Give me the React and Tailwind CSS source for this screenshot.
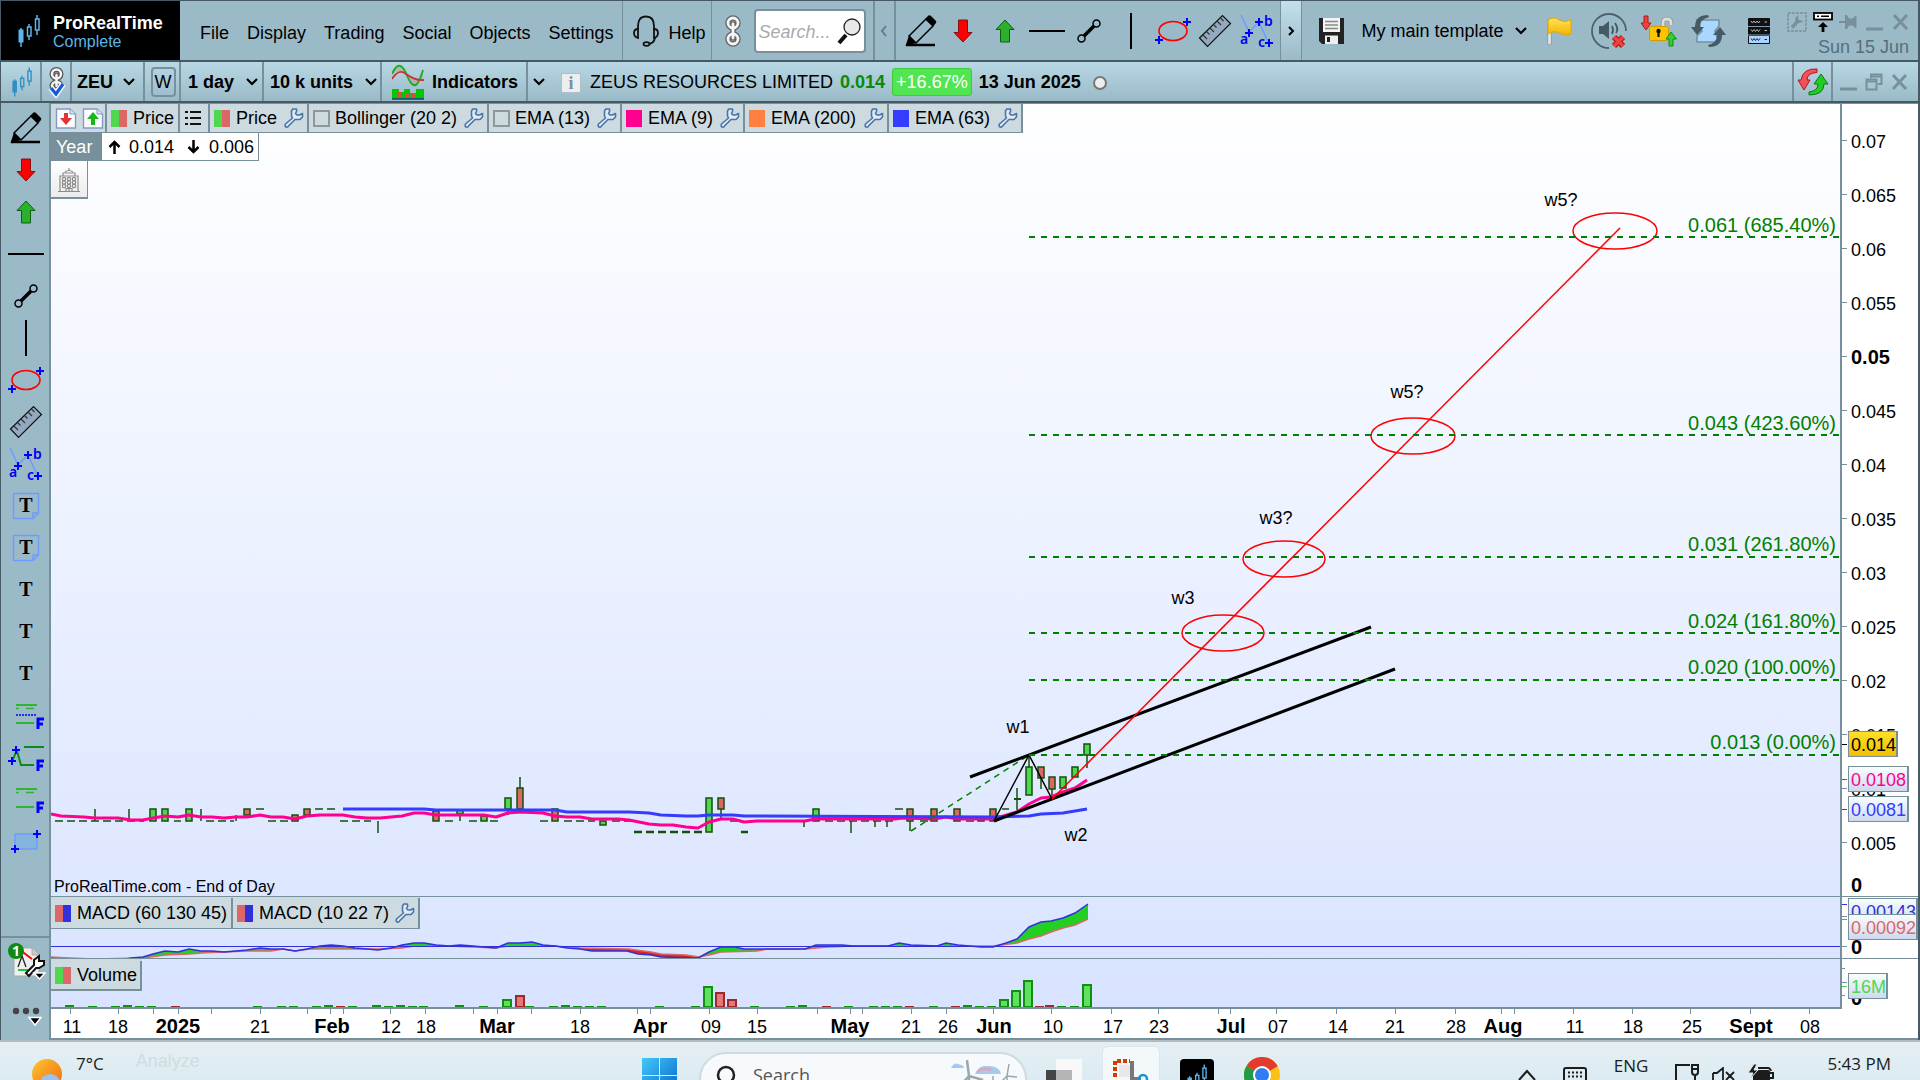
import React from "react";

/* ---------- icons ---------- */

const Pencil = () => (
  <svg width="32" height="32" viewBox="0 0 32 32">
    <path d="M4 21 L21 4 L28 11 L11 28 Z" fill="none" stroke="#000" strokeWidth="1.5" />
    <path d="M20 4 L23.5 0.5 Q25 0 26 1 L31 6 Q31.5 7 31 8 L28 11.5 Z" fill="#000" />
    <path d="M4 20.500 L11.500 28 L0.500 31 Z" fill="#000" />
    <path d="M1 30 H30" stroke="#000" strokeWidth="2.500" />
  </svg>
);

const DownArrow = () => (
  <svg width="20" height="24" viewBox="0 0 20 24">
    <path d="M5.500 1 H14.500 V13.500 H19 L10 23 L1 13.500 H5.500 Z" fill="#f00" stroke="#8a1010" />
  </svg>
);

const UpArrow = () => (
  <svg width="20" height="24" viewBox="0 0 20 24">
    <path d="M5.500 23 H14.500 V10.500 H19 L10 1 L1 10.500 H5.500 Z" fill="#2ab02a" stroke="#0f5c16" />
  </svg>
);

const HLine = () => (
  <svg width="36" height="4" viewBox="0 0 36 4">
    <path d="M0 2 H36" stroke="#000" strokeWidth="2" />
  </svg>
);

const VLine = () => (
  <svg width="4" height="36" viewBox="0 0 4 36">
    <path d="M2 0 V36" stroke="#000" strokeWidth="2" />
  </svg>
);

const Segment = () => (
  <svg width="24" height="24" viewBox="0 0 24 24">
    <path d="M7 17 L17 7" stroke="#000" strokeWidth="3.500" />
    <circle cx="4.500" cy="19.500" r="3.500" fill="none" stroke="#000" strokeWidth="1.500" />
    <circle cx="19.500" cy="4.500" r="3.500" fill="none" stroke="#000" strokeWidth="1.500" />
  </svg>
);

const Oval = () => (
  <svg width="38" height="28" viewBox="0 0 38 28">
    <ellipse cx="19" cy="14" rx="14" ry="9.500" fill="none" stroke="#f00" strokeWidth="1.600" />
    <path d="M29 5 H37 M33 1 V9 M1 23 H9 M5 19 V27" stroke="#00f" strokeWidth="2" />
  </svg>
);

const Ruler = () => (
  <svg width="34" height="34" viewBox="0 0 34 34">
    <path d="M1.500 24 L24.500 1.500 L32.500 9.500 L9.500 32.500 Z" fill="#93a9bf" stroke="#111" strokeWidth="1.200" />
    <path d="M5 21 l4 4 M8.500 17.500 l3 3 M12 14 l4 4 M15.500 10.500 l3 3 M19 7 l4 4 M22.500 4 l3 3" stroke="#333" strokeWidth="1.100" />
  </svg>
);

const Abc = () => (
  <svg width="34" height="34" viewBox="0 0 34 34" className="overflow-visible">
    <path d="M1 1 L9 18 L19 8 L28 28" fill="none" stroke="#6b9dff" strokeWidth="1.600" />
    <path d="M5 19 H13 M9 15 V23 M15 8 H23 M19 4 V12 M25 29 H33 M29 25 V33" stroke="#00f" strokeWidth="2" />
    <g fill="#00e" fontSize="14" fontWeight="600" fontFamily="'Noto Sans', sans-serif">
      <text x="0" y="30">a</text>
      <text x="24" y="12">b</text>
      <text x="18" y="33">c</text>
    </g>
  </svg>
);

const TextTool = ({ boxed }) => (
  <svg width="28" height="28" viewBox="0 0 28 28">
    {boxed && (
      <path d="M1.500 1.500 H26.500 V21 L21 26.500 H1.500 Z M26 21 H21 V26" fill="none" stroke="#6b9dff" strokeWidth="1.500" />
    )}
    <text x="14" y="20" textAnchor="middle" fontSize="20" fontWeight="700" fontFamily="'Liberation Serif', serif">T</text>
  </svg>
);

const Fib = ({ dotted }) => (
  <svg width="36" height="28" viewBox="0 0 36 28">
    <path d="M8 3 H29 M8 21 H26" stroke="#2fb52f" strokeWidth="2" />
    <path d="M8 6.500 H11 M18 6.500 H26" stroke="#2fb52f" strokeWidth="1.600" />
    {dotted && <path d="M8 13 H29" stroke="#00f" strokeWidth="1.500" strokeDasharray="2 1" />}
    <path d="M30 27 V17 H36 M30 22 H35" fill="none" stroke="#00f" strokeWidth="3" />
  </svg>
);

const FibPath = () => (
  <svg width="38" height="28" viewBox="0 0 38 28">
    <path d="M17 3 H37 M10 7 L14 21 H27 M9 8 L5 18" fill="none" stroke="#0c8a1c" strokeWidth="2" />
    <path d="M5 6 H13 M9 2 V10 M1 17 H9 M5 13 V21" stroke="#00f" strokeWidth="2" />
    <path d="M31 27 V17 H37 M31 22 H36" fill="none" stroke="#00f" strokeWidth="3" />
  </svg>
);

const RectTool = () => (
  <svg width="34" height="28" viewBox="0 0 34 28">
    <rect x="6" y="6" width="22" height="15" fill="#84b4dc" stroke="#6b9dff" strokeWidth="1.500" />
    <path d="M24 6 H32 M28 2 V10 M2 21 H10 M6 17 V25" stroke="#00f" strokeWidth="2" />
  </svg>
);

const Candles = ({ color, size = 22 }) => (
  <svg width={size} height={size + 4} viewBox="0 0 22 26" fill="none" stroke={color} className="overflow-visible">
    <path d="M3 10 V29 M11 6 V9 M11 18 V22 M19 -3 V1 M19 12 V17" strokeWidth="1.500" />
    <rect x="1" y="12" width="4" height="12" fill={color} />
    <rect x="9.500" y="9" width="3.500" height="9" strokeWidth="1.500" />
    <rect x="17.500" y="1" width="3.500" height="11" strokeWidth="1.500" />
  </svg>
);

const Chevron = ({ className = "", d = "M1 1 L6 6 L11 1" }) => (
  <svg className={className} width="12" height="8" viewBox="0 0 12 8">
    <path d={d} fill="none" stroke="#000" strokeWidth="2.200" />
  </svg>
);

const Wrench = ({ color = "#4a74a8" }) => (
  <svg width="20" height="20" viewBox="0 0 20 20" className="shrink-0">
    <path
      d="M12.500 1 H8.800 L7.500 3 V8 L8.500 10 L1.500 16 Q0.500 18 2 19 Q4 19.500 4.500 18 L11 11.500 H16 L18.500 9 V5.500 L15.500 7 H13 L11.500 5.500 L12.500 3.500 Z"
      fill="#dfeaf5"
      stroke={color}
      strokeWidth="1.600"
      strokeLinejoin="round"
    />
  </svg>
);

const Chain = () => (
  <svg width="18" height="34" viewBox="0 0 18 34" fill="none">
    <g stroke="#666" strokeWidth="5.500">
      <rect x="4" y="4" width="10" height="10" rx="5" />
      <rect x="4" y="20" width="10" height="10" rx="5" />
      <path d="M9 10 V24" strokeLinecap="round" />
    </g>
    <g stroke="#f4f4f4" strokeWidth="2.800">
      <rect x="4" y="4" width="10" height="10" rx="5" />
      <rect x="4" y="20" width="10" height="10" rx="5" />
      <path d="M9 10 V24" strokeLinecap="round" />
    </g>
  </svg>
);

const ChainCheck = () => (
  <svg width="18" height="32" viewBox="0 0 18 32" fill="none">
    <g stroke="#555" strokeWidth="5">
      <rect x="4" y="3.500" width="9" height="9" rx="4.500" />
      <rect x="4" y="16" width="9" height="8" rx="4" />
      <path d="M8.500 9 V20" strokeLinecap="round" />
    </g>
    <g stroke="#f4f4f4" strokeWidth="2.500">
      <rect x="4" y="3.500" width="9" height="9" rx="4.500" />
      <rect x="4" y="16" width="9" height="8" rx="4" />
      <path d="M8.500 9 V20" strokeLinecap="round" />
    </g>
    <path d="M3 22 L8 28 L15 18" stroke="#fff" strokeWidth="6" />
    <path d="M3 22 L8 28 L15 18" stroke="#1759d8" strokeWidth="3.200" />
  </svg>
);

const Headset = () => (
  <svg width="26" height="32" viewBox="0 0 26 32" fill="none" stroke="#111" strokeWidth="1.800">
    <path d="M5 15 V11 Q5 1.500 13 1.500 Q21 1.500 21 11 V15" />
    <path d="M5 14 Q1 14 1 18 Q1 22 5 23 Z M21 14 Q25 14 25 18 Q25 22 21 23 Z" />
    <path d="M22 23 Q21 28 16 29" />
    <ellipse cx="13.500" cy="29" rx="3" ry="1.800" />
  </svg>
);

const SearchGlass = () => (
  <svg width="24" height="28" viewBox="0 0 24 28" className="shrink-0">
    <path d="M9 18 L2 26" stroke="#111" strokeWidth="4" />
    <circle cx="15" cy="10" r="8" fill="#e8e8e8" stroke="#222" strokeWidth="1.300" />
  </svg>
);

const Save = () => (
  <svg width="27" height="28" viewBox="0 0 27 28">
    <path d="M1 1 H26 V27 H4 L1 24 Z" fill="#222" />
    <rect x="5" y="1" width="17" height="14" fill="#f4f4f4" />
    <path d="M7 4.500 H20 M7 8 H20 M7 11.500 H20" stroke="#888" strokeWidth="1.500" />
    <rect x="7" y="18.500" width="13" height="8.500" fill="#eee" />
    <rect x="9" y="20" width="3" height="5" fill="#222" />
  </svg>
);

const Flag = () => (
  <svg width="26" height="28" viewBox="0 0 26 28">
    <defs>
      <linearGradient id="flag" x1="0" y1="0" x2="0" y2="1">
        <stop offset="0" stopColor="#ffe45a" />
        <stop offset="1" stopColor="#f5b400" />
      </linearGradient>
    </defs>
    <path d="M3.500 3 V26" stroke="#8f9ba2" strokeWidth="4.500" strokeLinecap="round" />
    <path d="M3.500 3 V26" stroke="#e2e2e2" strokeWidth="2.800" strokeLinecap="round" />
    <path d="M2 3 Q8 -1 13 3 Q18 6 25 3 V17 Q18 19 13 16 Q8 13 2 17 Z" fill="url(#flag)" stroke="#e0a800" />
  </svg>
);

const Sound = () => (
  <svg width="38" height="38" viewBox="0 0 38 38">
    <path d="M19 36 A17 17 0 1 1 36 19" fill="none" stroke="#4d626d" strokeWidth="1.800" />
    <path d="M9 14 H13 L19 9 V27 L13 22 H9 Z" fill="#455a64" />
    <path d="M22 14 Q24 18 22 22 M25 11 Q29 17 26 21" fill="none" stroke="#455a64" strokeWidth="1.800" />
    <path d="M24 25 L33 34 M33 25 L24 34" stroke="#b01616" strokeWidth="6" />
    <path d="M24 25 L33 34 M33 25 L24 34" stroke="#f04040" strokeWidth="3.500" />
  </svg>
);

const Lock = () => (
  <svg width="38" height="32" viewBox="0 0 38 32">
    <path d="M23 13 V8 Q23 4 27 4 Q31 4 31 8 V10" fill="none" stroke="#8f9699" strokeWidth="4.500" />
    <path d="M23 13 V8 Q23 4 27 4 Q31 4 31 8 V10" fill="none" stroke="#dcdcdc" strokeWidth="2.800" />
    <rect x="9.500" y="11.500" width="19" height="14" rx="2" fill="#ffc400" stroke="#d39a00" />
    <circle cx="18.500" cy="16" r="2.200" fill="#111" />
    <path d="M18.500 16 V22" stroke="#111" strokeWidth="2.200" />
    <path d="M4 1 H8 V8 H11 L6 15 L1 8 H4 Z" fill="#ee4040" stroke="#b31818" />
    <path d="M29 31 H33 V24 H36.500 L31 17 L26 24 H29 Z" fill="#32d032" stroke="#118a11" />
  </svg>
);

const Sync = () => (
  <svg width="36" height="34" viewBox="0 0 36 34">
    <path d="M6 6 H28 V12 L24 17 L28 28 H6 V22 L11 17 Z" fill="#a8d8ff" stroke="#78909c" strokeWidth="1.600" />
    <path d="M17 1 Q4 1 4 13 H0 L6 21 L13 13 H9 Q9 5 18 3 Z" fill="#455a64" />
    <path d="M18 33 Q31 33 31 21 H35 L29 13 L22 21 H26 Q26 29 17 31 Z" fill="#455a64" />
  </svg>
);

const Server = () => (
  <svg width="24" height="28" viewBox="0 0 24 28">
    <rect x="1" y="1" width="22" height="26" rx="1" fill="#111" />
    <rect x="2" y="19" width="20" height="7" fill="#a8d4ff" />
    <path d="M1 9.500 H23 M1 18 H23" stroke="#7f9aa8" />
    <path d="M4 4 l1.500 2 l1.500 -2 l1.500 2 l1.500 -2 l1.500 2 l1.500 -2 M4 12.500 l1.500 2 l1.500 -2 l1.500 2 l1.500 -2 l1.500 2 l1.500 -2 M17.500 5 h2.500 M17.500 13.500 h2.500" fill="none" stroke="#bbb" />
    <path d="M4 21.500 l1.500 2 l1.500 -2 l1.500 2 l1.500 -2 l1.500 2 l1.500 -2 M17.500 22.500 h2.500" fill="none" stroke="#223" />
  </svg>
);

const WrenchBox = () => (
  <svg width="20" height="20" viewBox="0 0 20 20">
    <rect x="1" y="1" width="18" height="18" fill="none" stroke="#78909c" strokeWidth="1.500" strokeDasharray="3 1" />
    <path d="M5 15.500 L11 9" stroke="#78909c" strokeWidth="3.500" />
    <path d="M11.500 3.500 Q7 5 8.500 9 Q11 13 16.500 9 L13.500 8.500 L11 7 Z" fill="#78909c" />
  </svg>
);

const Detach = () => (
  <svg width="20" height="20" viewBox="0 0 20 20">
    <rect x="1" y="1" width="18" height="6.500" fill="#fff" stroke="#000" strokeWidth="1.800" />
    <path d="M4 4.200 H6 M8 4.200 H16" stroke="#000" strokeWidth="1.500" />
    <path d="M10 20 V13" stroke="#000" strokeWidth="2.800" />
    <path d="M5 15 L10 10 L15 15 Z" fill="#000" />
  </svg>
);

const Pin = () => (
  <svg width="18" height="14" viewBox="0 0 18 14">
    <path d="M0 7 H8" stroke="#78909c" strokeWidth="2" />
    <path d="M6 0 H8 L10 3.500 H14 L16 1 H17.500 V13 H16 L14 10.500 H10 L8 14 H6 Z" fill="#78909c" />
  </svg>
);

const Minimize = () => (
  <svg width="17" height="20" viewBox="0 0 17 20">
    <path d="M1 17 H16" stroke="#78909c" strokeWidth="3" strokeLinecap="round" />
  </svg>
);

const Close = () => (
  <svg width="17" height="18" viewBox="0 0 17 18">
    <path d="M2 2 L15 16 M15 2 L2 16" stroke="#78909c" strokeWidth="3" />
  </svg>
);

const Restore = () => (
  <svg width="18" height="18" viewBox="0 0 18 18" fill="none" stroke="#78909c" strokeWidth="2">
    <path d="M6 5 V1.500 H16.500 V11 H13" />
    <rect x="1.500" y="6.500" width="10" height="10" />
    <path d="M1.500 8.500 H11.500 M6 3.500 H16" />
  </svg>
);

const Refresh = () => (
  <svg width="32" height="28" viewBox="0 0 32 28">
    <path d="M20 1 Q6 0 4 12 H1 L7 22 L13 12 H10 Q10 5 20 4.500 Z" fill="#f3505a" stroke="#b01822" />
    <path d="M12 27 Q27 27 27 16 H31 L24 6 L17 16 H21 Q21 23 12 24 Z" fill="#20cc26" stroke="#0c7a12" />
  </svg>
);

const IndicatorIcon = () => (
  <svg width="32" height="38" viewBox="0 0 32 38">
    <path d="M0 11 Q7 -3 14 10 Q20 26 25 21 Q28 17 31 7 V17 Q22 18 14 11 Q7 6 0 11 Z" fill="#c87878" fillOpacity="0.350" />
    <path d="M0 11 Q7 -5 14 10 Q20 26 25 21 Q28 17 31 7" fill="none" stroke="#18b018" strokeWidth="1.800" />
    <path d="M0 16 Q7 5 14 11 Q24 18 32 17" fill="none" stroke="#c83232" strokeWidth="1.800" />
    <path d="M0 26 H7 V29 H12 V26 H18 V30 H24 V26 H32 V36 H0 Z" fill="#00c800" />
    <path d="M6 29 H10 V35 H6 Z M14 31 H17 V35 H14 Z M20 30 H24 V35 H20 Z" fill="#e04848" />
    <path d="M0 36 H32" stroke="#1a3a8a" strokeWidth="1.500" />
  </svg>
);

const PageArrow = ({ up }) => (
  <svg width="22" height="21" viewBox="0 0 22 21">
    <path d="M1.500 1 H15 L20.500 6 V20 H1.500 Z" fill="#fdfdff" stroke="#7f9cc8" strokeWidth="1.400" />
    <path d="M15 1 V6 H20.500" fill="#d4e0f2" stroke="#7f9cc8" />
    {up ? (
      <path d="M11 4 L17 11 H13 V17 H9 V11 H5 Z" fill="#16b816" />
    ) : (
      <path d="M11 17 L17 10 H13 V5 H9 V10 H5 Z" fill="#e63232" />
    )}
  </svg>
);

const ListIcon = () => (
  <svg width="18" height="16" viewBox="0 0 18 16">
    <path d="M6 2 H17 M6 8 H17 M6 14 H17" stroke="#111" strokeWidth="1.800" />
    <path d="M1 2 H4 M1 8 H4 M1 14 H4" stroke="#111" strokeWidth="2.200" />
  </svg>
);

const Building = () => (
  <svg width="22" height="24" viewBox="0 0 22 24" fill="none" stroke="#8c8c8c" strokeWidth="1.200">
    <path d="M2 23 V8 H20 V23 M0 23.500 H22 M5 8 V5 H17 V8 M7 4 Q11 1 15 4 M11 2 V0" />
    {[11, 14.500, 18].map((y) => [6, 11, 16].map((x) => <circle key={x + "-" + y} cx={x} cy={y} r="1.700" />))}
    <path d="M8 23 V20.500 H14 V23 M11 20.500 V23" />
  </svg>
);

const Notes = () => (
  <svg width="38" height="42" viewBox="0 0 38 42">
    <path d="M6 6 H24 L31 13 V34 H6 Z" fill="#f0f0f0" stroke="#aaa" />
    <path d="M24 6 V13 H31" fill="#ccc" stroke="#aaa" />
    <path d="M10 25 L14 14 L18 25" fill="none" stroke="#222" strokeWidth="1.300" />
    <path d="M12 8 L24 17" stroke="#f00" strokeWidth="2" />
    <path d="M10 28 H20" stroke="#1ec83c" strokeWidth="2" />
    <path d="M18 31 L26 23 V18 L31 14 V19 H36 V23 L31 26 H28 L21 34 Z" fill="#fff" stroke="#111" strokeWidth="2" />
    <path d="M26 31 H37 L31.500 37 Z" fill="#000" stroke="#fff" strokeWidth="1.500" />
    <circle cx="8" cy="9" r="8" fill="#0c8a12" />
    <text x="8" y="14" textAnchor="middle" fontSize="14" fontWeight="700" fill="#fff" fontFamily="'Noto Sans', sans-serif">1</text>
  </svg>
);

const More = () => (
  <svg width="30" height="22" viewBox="0 0 30 22">
    <circle cx="4" cy="5" r="3.200" fill="#444" />
    <circle cx="14" cy="5" r="3.200" fill="#444" />
    <circle cx="24" cy="5" r="3.200" fill="#444" />
    <path d="M17 11.500 H29 L23 19 Z" fill="#000" stroke="#fff" strokeWidth="1.500" />
  </svg>
);

const Swatch = ({ left, right = left }) => (
  <svg width="16" height="17" viewBox="0 0 16 17" className="shrink-0">
    <rect width="9" height="17" fill={left} />
    <rect x="8" width="8" height="17" fill={right} />
  </svg>
);

/* ---------- chart data ---------- */

const GREEN = "#4fd84f";
const RED = "#dd6666";

const candles = [
  // x, body top, body bottom, up, wick top, wick bottom
  [153, 809, 821, 1], [165, 809, 821, 1], [189, 809, 821, 1], [247, 809, 815, 0], [295, 815, 821, 0],
  [307, 809, 815, 0], [436, 811, 821, 0], [460, 810, 814, 1, 810, 821], [484, 816, 821, 1],
  [508, 798, 809, 1, 798, 815], [520, 788, 809, 0, 777, 809], [555, 809, 821, 0], [603, 821, 825, 1],
  [709, 798, 832, 1], [721, 798, 809, 0, 798, 818], [816, 809, 821, 1], [910, 809, 821, 0, 809, 831],
  [934, 809, 821, 0], [957, 809, 821, 0], [981, 817, 821, 0], [993, 809, 821, 0],
  [1029, 767, 795, 1, 757, 795], [1041, 767, 778, 0, 767, 789], [1052, 777, 789, 0, 777, 798],
  [1063, 777, 788, 1], [1075, 767, 777, 1], [1087, 744, 755, 1, 744, 768],
];

const wicks = [
  [95, 809, 821], [129, 809, 821], [201, 809, 821], [236, 815, 821], [378, 821, 833], [804, 821, 827],
  [851, 821, 833], [875, 821, 827], [887, 821, 827], [1017, 788, 810],
];

const flatRuns = [
  [55, 144, 821], [174, 181, 821], [206, 234, 821], [268, 289, 821], [340, 371, 821], [445, 453, 821],
  [469, 477, 821], [490, 501, 821], [540, 549, 821], [564, 595, 821], [612, 633, 821], [730, 737, 821],
  [825, 895, 821], [920, 928, 821], [966, 975, 821], [256, 264, 809], [315, 335, 809], [895, 903, 809], [1002, 1009, 809],
];

const ema9 =
  "51,814 61,816 84,817 95,818 118,818 131,820 143,820 153,818 165,816 178,817 189,815 201,817 212,817 224,818 236,817 247,817 260,815 271,817 283,817 295,819 307,816 320,815 343,815 355,817 367,818 380,818 391,817 402,816 414,813 424,813 436,815 484,815 496,817 508,813 520,812 543,813 555,816 567,817 580,817 592,819 618,819 629,820 649,824 661,825 673,825 686,827 698,828 709,822 721,819 733,819 744,822 757,821 805,821 815,819 895,819 903,818 934,819 946,817 958,819 993,819 1017,812 1029,804 1041,798 1051,797 1063,792 1075,788 1087,780";

const ema63 =
  "343,809 424,809 436,810 555,810 567,812 629,812 649,813 661,815 686,816 698,816 709,815 733,815 744,816 993,817 1029,816 1041,814 1063,813 1075,811 1087,809";

const macdLine = [
  [51, 960], [120, 960], [131, 958], [143, 957], [153, 954], [165, 951], [178, 952], [189, 949], [201, 951], [212, 951], [224, 952],
  [236, 951], [247, 950], [260, 948], [271, 949], [283, 949], [295, 951], [307, 949], [320, 946], [331, 945],
  [343, 946], [355, 948], [367, 949], [378, 950], [391, 948], [402, 945], [414, 943], [424, 943], [436, 945],
  [449, 946], [460, 945], [473, 946], [484, 947], [496, 948], [508, 943], [520, 943], [532, 942], [543, 945],
  [555, 946], [567, 948], [580, 949], [592, 951], [627, 951], [638, 954], [651, 955], [661, 957], [698, 958],
  [709, 952], [721, 947], [735, 947], [744, 949], [805, 949], [816, 945], [842, 945], [853, 946], [888, 946],
  [899, 943], [911, 945], [937, 946], [946, 943], [958, 945], [981, 947], [993, 947], [1006, 943], [1017, 939],
  [1029, 927], [1041, 922], [1051, 921], [1063, 918], [1075, 913], [1088, 904],
];

const macdSignal = [
  [51, 957], [69, 958], [94, 959], [143, 958], [165, 955], [189, 954], [201, 953], [224, 952], [247, 951],
  [271, 951], [283, 949], [295, 951], [310, 949], [378, 949], [402, 948], [414, 946], [449, 946], [496, 948],
  [508, 946], [555, 946], [580, 948], [629, 949], [651, 952], [661, 954], [686, 955], [699, 957], [709, 955],
  [721, 952], [757, 951], [768, 949], [806, 949], [827, 947], [853, 946], [993, 946], [1017, 943], [1029, 939],
  [1041, 936], [1051, 932], [1063, 928], [1075, 925], [1088, 919],
];

const valueAt = (pts, x) => {
  for (let i = 1; i < pts.length; i++) {
    const [x0, y0] = pts[i - 1];
    const [x1, y1] = pts[i];
    if (x <= x1) return y0 + ((y1 - y0) * (x - x0)) / (x1 - x0);
  }
  return pts[pts.length - 1][1];
};

const macdFill = [];
for (let x = 51; x < 1088; x += 3) {
  const x2 = Math.min(x + 3, 1088);
  const a = valueAt(macdLine, x);
  const b = valueAt(macdLine, x2);
  const c = valueAt(macdSignal, x2);
  const d = valueAt(macdSignal, x);
  macdFill.push({ pts: `${x},${a} ${x2},${b} ${x2},${c} ${x},${d}`, up: a + b < c + d });
}

const toPoints = (pts) => pts.map((p) => p.join(",")).join(" ");

const volumes = [
  [70, 2, 1], [93, 1, 1], [116, 1, 1], [128, 2, 1], [140, 1, 1], [152, 1, 1], [176, 1, 0], [258, 1, 1], [282, 1, 1],
  [294, 1, 1], [317, 1, 1], [329, 2, 1], [341, 1, 0], [353, 1, 1], [377, 2, 1], [389, 1, 1], [401, 2, 1],
  [413, 1, 1], [424, 1, 1], [460, 2, 1], [484, 1, 1], [507, 6, 1], [520, 10, 0], [530, 1, 1], [554, 1, 1],
  [566, 2, 1], [578, 1, 1], [590, 1, 1], [602, 1, 1], [660, 1, 1], [696, 1, 1], [708, 19, 1], [720, 13, 0],
  [732, 6, 0], [755, 1, 1], [791, 1, 1], [803, 2, 1], [827, 1, 0], [849, 1, 1], [874, 1, 1], [886, 1, 1],
  [898, 1, 1], [910, 1, 0], [934, 1, 1], [956, 1, 0], [968, 2, 1], [980, 1, 1], [992, 1, 1], [1004, 6, 1],
  [1016, 15, 1], [1028, 25, 1], [1040, 1, 0], [1050, 2, 0], [1062, 1, 1], [1075, 1, 1], [1087, 21, 1],
];

const fibLevels = [
  [237, "0.061 (685.40%)", 232], [435, "0.043 (423.60%)", 430], [557, "0.031 (261.80%)", 551],
  [633, "0.024 (161.80%)", 628], [680, "0.020 (100.00%)", 674], [755, "0.013 (0.00%)", 749],
];

const priceTicks = [
  [141, "0.07"], [195, "0.065"], [249, "0.06"], [303, "0.055"], [357, "0.05", true], [411, "0.045"], [465, "0.04"],
  [519, "0.035"], [573, "0.03"], [627, "0.025"], [681, "0.02"], [735, "0.015"], [789, "0.01"], [843, "0.005"],
];

const dateTicks = [
  70, 118, 153, 178, 211, 260, 307, 330, 343, 390, 425, 473, 497, 531, 580, 637, 650, 709, 757, 817, 850, 862, 911,
  946, 993, 1051, 1111, 1158, 1218, 1230, 1276, 1336, 1395, 1455, 1501, 1514, 1573, 1632, 1690, 1750, 1809,
];

const dateLabels = [
  [72, "11"], [118, "18"], [178, "2025", true], [260, "21"], [332, "Feb", true], [391, "12"], [426, "18"],
  [497, "Mar", true], [580, "18"], [650, "Apr", true], [711, "09"], [757, "15"], [850, "May", true], [911, "21"],
  [948, "26"], [994, "Jun", true], [1053, "10"], [1113, "17"], [1159, "23"], [1231, "Jul", true], [1278, "07"],
  [1338, "14"], [1395, "21"], [1456, "28"], [1503, "Aug", true], [1575, "11"], [1633, "18"], [1692, "25"],
  [1751, "Sept", true], [1810, "08"],
];

/* ---------- chart panels ---------- */

const PricePlot = () => (
  <svg className="absolute inset-0 h-full w-full">
    <g transform="translate(-51 -104)">
      <g stroke="#14500a" strokeWidth="1.500">
        {flatRuns.map(([a, b, y]) => (
          <path key={a + "-" + y} d={`M${a} ${y} H${b}`} strokeDasharray="8 4" />
        ))}
        <path d="M634 832 H703 M741 832 H748" strokeWidth="2.500" strokeDasharray="8 4" />
        <path d="M1014 799 H1021" strokeWidth="2" />
        {wicks.map(([x, a, b]) => (
          <path key={x} d={`M${x} ${a} V${b}`} />
        ))}
        {candles.map(([x, a, b, up, wa, wb]) => (
          <g key={x}>
            {wa && <path d={`M${x} ${wa} V${wb}`} />}
            <rect x={x - 3} y={a} width="6" height={b - a} fill={up ? GREEN : RED} />
          </g>
        ))}
      </g>
      <polyline points={ema9} fill="none" stroke="#ff0090" strokeWidth="3" strokeLinejoin="round" />
      <polyline points={ema63} fill="none" stroke="#333cff" strokeWidth="3" strokeLinejoin="round" />
      <path d="M911 831 L1029 755" stroke="#008000" strokeWidth="1.500" strokeDasharray="6 5" />
      <path d="M994 821 L1029 755 L1052 799" fill="none" stroke="#000" strokeWidth="1.500" />
      <path d="M970 777 L1371 627 M994 821 L1395 669" stroke="#000" strokeWidth="3" />
      <path d="M1052 799 L1620 228" stroke="#f00" strokeWidth="1.500" />
      <g fill="none" stroke="#f00" strokeWidth="1.500">
        <ellipse cx="1615" cy="231" rx="42" ry="18" />
        <ellipse cx="1413" cy="436" rx="42" ry="18" />
        <ellipse cx="1284" cy="559" rx="41" ry="18" />
        <ellipse cx="1223" cy="633" rx="41" ry="18" />
      </g>
      <g fontSize="18" textAnchor="middle">
        <text x="1561" y="206">w5?</text>
        <text x="1407" y="398">w5?</text>
        <text x="1276" y="524">w3?</text>
        <text x="1183" y="604">w3</text>
        <text x="1018" y="733">w1</text>
        <text x="1076" y="841">w2</text>
      </g>
    </g>
    {fibLevels.map(([y, label, base]) => (
      <g key={label}>
        <line x1="978" x2="100%" y1={y - 104} y2={y - 104} stroke="#008000" strokeWidth="2" strokeDasharray="6 6" />
        <text x="100%" dx="-4" y={base - 104} textAnchor="end" fontSize="20" fill="#008000">
          {label}
        </text>
      </g>
    ))}
  </svg>
);

const Tag = ({ y, w, h = 26, color, fill = "url(#tag)", children }) => (
  <g>
    <rect x="6.500" y={y - 0.5} width={w} height={h} fill={fill} stroke="#78909c" />
    <path d={`M${w + 6} ${y - 1} v${h + 1}`} stroke="#78909c" strokeWidth="2" />
    <text x="9" y={y + 19} fontSize="18" fill={color}>
      {children}
    </text>
  </g>
);

const Gradients = () => (
  <defs>
    <linearGradient id="tag" x1="0" y1="0" x2="0" y2="1">
      <stop offset="0" stopColor="#f8fffe" />
      <stop offset="1" stopColor="#cdd8f0" />
    </linearGradient>
    <linearGradient id="gold" x1="0" y1="0" x2="0" y2="1">
      <stop offset="0" stopColor="#ffe128" />
      <stop offset="1" stopColor="#f3bd00" />
    </linearGradient>
  </defs>
);

const PriceAxis = () => (
  <svg className="absolute inset-0 h-full w-full overflow-hidden">
    <Gradients />
    {priceTicks.map(([y, label, bold]) => (
      <g key={label}>
        <path d={`M0 ${y - 104 - 0.5} H5`} stroke="#78909c" />
        <text x="9" y={y - 97} fontSize={bold ? 20 : 18} fontWeight={bold ? 700 : 400}>
          {label}
        </text>
      </g>
    ))}
    <text x="9" y="788" fontSize="20" fontWeight="700">0</text>
    <path d="M0 640.500 H5" stroke="#000" />
    <path d="M0 675.500 H5" stroke="#ff0090" />
    <path d="M0 705.500 H5" stroke="#333cff" />
    <Tag y={628} w={49} h={25} color="#000" fill="url(#gold)">0.014</Tag>
    <Tag y={663} w={60} h={25} color="#ff0090">0.0108</Tag>
    <Tag y={693} w={60} h={25} color="#333cff">0.0081</Tag>
  </svg>
);

const MacdPlot = () => (
  <svg className="absolute inset-0 h-full w-full">
    <g transform="translate(-51 -897)">
      {macdFill.map((f) => (
        <polygon key={f.pts} points={f.pts} fill={f.up ? "#22d022" : "#e02020"} />
      ))}
      <polyline points={toPoints(macdSignal)} fill="none" stroke="#dd6666" strokeWidth="1.500" />
      <polyline points={toPoints(macdLine)} fill="none" stroke="#3030dd" strokeWidth="1.500" />
    </g>
    <line x1="0" x2="100%" y1="49.500" y2="49.500" stroke="#3030dd" />
  </svg>
);

const MacdAxis = () => (
  <svg className="absolute inset-0 h-full w-full overflow-hidden">
    <path d="M0 7.500 H5" stroke="#3030dd" />
    <path d="M0 19.500 H5 M0 49.500 H5" stroke="#78909c" />
    <path d="M0 22.500 H5" stroke="#dd6666" />
    <Tag y={2} w={69} color="#3030dd">0.00143</Tag>
    <Tag y={18} w={69} h={25} color="#dd6666">0.00092</Tag>
    <text x="9" y="57" fontSize="20" fontWeight="700">0</text>
  </svg>
);

const VolumePlot = () => (
  <svg className="absolute inset-0 h-full w-full">
    {volumes.map(([x, h, up]) =>
      h < 4 ? (
        <rect key={x} x={x - 56} y={48 - h} width="9" height={h} fill={up ? "#109010" : "#a02828"} />
      ) : (
        <rect key={x} x={x - 55} y={47 - h} width="8" height={h + 1} fill={up ? "#5fe05f" : "#e57878"} stroke={up ? "#109010" : "#a02828"} strokeWidth="2" />
      )
    )}
  </svg>
);

const VolumeAxis = () => (
  <svg className="absolute inset-0 h-full w-full overflow-visible">
    <path d="M0 9.500 H3 M0 23.500 H5 M0 36.500 H3" stroke="#78909c" />
    <path d="M0 27.500 H5" stroke="#4fd84f" />
    <text x="9" y="46" fontSize="20" fontWeight="700">0</text>
    <Tag y={15} w={39} h={25} color="#4fd84f">16M</Tag>
  </svg>
);

const DateAxis = () => (
  <svg className="h-[29px] w-full">
    <g transform="translate(-51 0)">
      {dateTicks.map((x) => (
        <path key={x} d={`M${x}.500 0 V5`} stroke="#78909c" />
      ))}
      {dateLabels.map(([x, label, bold]) => (
        <text key={x} x={x} y="24" textAnchor="middle" fontSize={bold ? 20 : 18} fontWeight={bold ? 700 : 400}>
          {label}
        </text>
      ))}
    </g>
  </svg>
);

const Panel = ({ className, plot, axis, children }) => (
  <div className={"flex border-[#78909c] " + className}>
    <div className="relative min-w-0 flex-1">
      {plot}
      <div className="relative h-full">{children}</div>
    </div>
    <div className="relative w-[78px] shrink-0 border-l-2 border-[#78909c] bg-white">{axis}</div>
  </div>
);

/* ---------- bars ---------- */

const tools = [
  ["Pencil", <Pencil />], ["Sell arrow", <DownArrow />], ["Buy arrow", <UpArrow />], ["Horizontal line", <HLine />],
  ["Segment", <Segment />], ["Vertical line", <VLine />], ["Ellipse", <Oval />], ["Ruler", <Ruler />], ["Pattern", <Abc />],
];

const sideTools = [
  ...tools, ["Note 1", <TextTool boxed />], ["Note 2", <TextTool boxed />], ["Text 1", <TextTool />],
  ["Text 2", <TextTool />], ["Text 3", <TextTool />], ["Fibonacci retracement", <Fib dotted />],
  ["Fibonacci projection", <FibPath />], ["Fibonacci levels", <Fib />], ["Rectangle", <RectTool />],
];

const menus = ["File", "Display", "Trading", "Social", "Objects", "Settings"];

const cell = "flex shrink-0 items-center border-r-2 border-[#78909c] ";
const tab = "flex h-full shrink-0 items-center gap-[5px] border-r-2 border-[#78909c] pl-1 whitespace-nowrap ";

const Header = () => (
  <header className="flex h-[62px] shrink-0 border-t border-b-2 border-[#455a64] bg-[#9bbac8]">
    <div className="flex w-[179px] shrink-0 items-center gap-[13px] bg-black pl-[17px]">
      <Candles color="#5db4e8" />
      <div className="pt-[2px]">
        <div className="text-[18px] leading-[20px] font-bold text-white">ProRealTime</div>
        <div className="text-[16px] leading-[18px] text-[#5db4e8]">Complete</div>
      </div>
    </div>
    <nav className="flex shrink-0 items-center gap-[18px] border-r border-[#78909c] pt-[4px] pr-[8px] pl-[20px]">
      {menus.map((m) => (
        <button key={m}>{m}</button>
      ))}
    </nav>
    <button className="flex w-[89px] shrink-0 items-center gap-[10px] border-r border-[#78909c] pl-[10px]">
      <Headset />
      <span className="pt-[4px]">Help</span>
    </button>
    <button aria-label="Link" className="flex w-[42px] shrink-0 items-center justify-center">
      <Chain />
    </button>
    <label className="my-auto flex h-[44px] w-[112px] shrink-0 items-center rounded-[4px] border-2 border-[#78909c] bg-white pr-[3px] pl-[3px]">
      <input aria-label="Search" placeholder="Search..." className="mt-[3px] w-[78px] bg-transparent italic outline-none placeholder:text-[#aaa]" />
      <SearchGlass />
    </label>
    <button aria-label="Previous tools" className="ml-[7px] flex w-[23px] shrink-0 items-center justify-center border-x-2 border-[#78909c]">
      <svg width="8" height="12" viewBox="0 0 8 12">
        <path d="M6 1 L2 6 L6 11" fill="none" stroke="#607d8b" strokeWidth="2" />
      </svg>
    </button>
    <div className="flex shrink-0 pl-[4px]">
      {tools.map(([name, icon]) => (
        <button key={name} aria-label={name} className="flex w-[42px] items-center justify-center">
          {icon}
        </button>
      ))}
    </div>
    <button aria-label="More tools" className="ml-[2px] flex w-[22px] shrink-0 items-center justify-center border-x border-[#78909c] bg-linear-to-b from-[#c3e0ec] to-[#9bbac8]">
      <svg width="8" height="12" viewBox="0 0 8 12">
        <path d="M2 2 L6 6 L2 10" fill="none" stroke="#000" strokeWidth="2" />
      </svg>
    </button>
    <button className="flex shrink-0 items-center gap-[13px] pl-[16px]">
      <Save />
      <span className="flex items-center gap-[11px] pl-[4px]">
        My main template
        <Chevron />
      </span>
    </button>
    <div className="ml-auto flex shrink-0">
      {[["Alerts", <Flag />], ["Sound", <Sound />], ["Trading lock", <Lock />], ["Sync", <Sync />], ["Server", <Server />]].map(([n, i]) => (
        <button key={n} aria-label={n} className="flex w-[50px] items-center justify-center">
          {i}
        </button>
      ))}
      <div className="flex w-[134px] flex-col pt-[8px] pr-[5px]">
        <div className="flex h-[26px] items-center">
          {[["Customize", <WrenchBox />], ["Detach", <Detach />], ["Pin", <Pin />], ["Minimize", <Minimize />], ["Close", <Close />]].map(([n, i]) => (
            <button key={n} aria-label={n} className="flex flex-1 justify-center">
              {i}
            </button>
          ))}
        </div>
        <span className="pr-[4px] text-right leading-[26px] text-[#546e7a]">Sun 15 Jun</span>
      </div>
    </div>
  </header>
);

const ChartBar = () => (
  <div className="flex h-[41px] shrink-0 border-b-2 border-[#455a64] bg-linear-to-b from-[#b9d8e5] to-[#9bbac8]">
    <button aria-label="Chart type" className={cell + "w-[41px] justify-center pr-[2px] pl-[4px]"}>
      <Candles color="#2f8fc4" size={20} />
    </button>
    <button aria-label="Linked" className={cell + "w-[30px] justify-center pl-[2px]"}>
      <ChainCheck />
    </button>
    <button className={cell + "w-[73px] gap-[10px] pl-[5px] font-bold"}>
      ZEU <Chevron />
    </button>
    <div className={cell + "w-[36px] justify-center pl-[2px]"}>
      <button className="h-[30px] w-[25px] rounded-[4px] border-2 border-[#78909c] pt-[1px]">
        <span className="flex justify-center">W</span>
      </button>
    </div>
    <button className={cell + "w-[83px] gap-[12px] pl-[7px] font-bold"}>
      1 day <Chevron />
    </button>
    <button className={cell + "w-[118px] gap-[12px] pl-[6px] font-bold"}>
      10 k units <Chevron />
    </button>
    <button className={cell + "w-[146px] gap-[8px] pl-[10px] font-bold"}>
      <IndicatorIcon /> Indicators
    </button>
    <button aria-label="Indicator menu" className="flex w-[22px] shrink-0 items-center justify-center">
      <Chevron />
    </button>
    <div className="flex min-w-0 flex-1 items-center pl-[11px] whitespace-nowrap">
      <button aria-label="Information" className="mt-[2px] h-[20px] w-[20px] border border-[#b0bec5] bg-[#eceff1] font-['Liberation_Serif',serif] text-[18px] leading-[18px] font-bold text-[#78909c]">
        i
      </button>
      <span className="ml-[9px]">ZEUS RESOURCES LIMITED</span>
      <span className="ml-[7px] font-bold text-[#0a8a0a]">0.014</span>
      <span className="ml-[7px] rounded-[3px] border border-[#3ccc3c] bg-[#52e552] px-[3px] leading-[26px] text-white">+16.67%</span>
      <span className="ml-[7px] font-bold">13 Jun 2025</span>
      <span className="mt-[3px] ml-[12px] h-[14px] w-[14px] rounded-full border-2 border-[#777] bg-[#eee]" />
    </div>
    <button aria-label="Refresh" className="flex w-[41px] shrink-0 items-center justify-center border-x-2 border-[#78909c]">
      <Refresh />
    </button>
    <div className="flex w-[85px] shrink-0 items-center pr-[6px] pl-[3px]">
      {[["Minimize chart", <Minimize />], ["Restore chart", <Restore />], ["Close chart", <Close />]].map(([n, i]) => (
        <button key={n} aria-label={n} className="flex flex-1 justify-center">
          {i}
        </button>
      ))}
    </div>
  </div>
);

const Sidebar = () => (
  <aside className="flex w-[50px] shrink-0 flex-col border-r-2 border-[#78909c] bg-[#9bbac8] pt-[4px]">
    {sideTools.map(([name, icon]) => (
      <button key={name} aria-label={name} className="flex h-[42px] items-center justify-center pl-[2px]">
        {icon}
      </button>
    ))}
    <div className="mt-auto flex h-[104px] flex-col items-center border-t-2 border-[#78909c] pt-[4px] pl-[3px]">
      <button aria-label="Drawing objects">
        <Notes />
      </button>
      <button aria-label="More" className="mt-[22px]">
        <More />
      </button>
    </div>
  </aside>
);

const Indicator = ({ width, color, label, check, wrench = true, left, right }) => (
  <div className={tab + width}>
    {check ? (
      <label className="flex items-center gap-[5px]">
        <input type="checkbox" className="h-[17px] w-[17px] appearance-none border-2 border-[#90979b]" />
        {label}
      </label>
    ) : (
      <button className="flex items-center gap-[6px]">
        <Swatch left={color || left} right={color || right} />
        {label}
      </button>
    )}
    {wrench && (
      <button aria-label={label + " settings"} className="mr-[3px] ml-auto">
        <Wrench />
      </button>
    )}
  </div>
);

const PriceTabs = () => (
  <div className="flex h-full flex-col items-start">
    <div className="flex h-[29px] shrink-0 border-b border-[#78909c] bg-[#cddbe1]">
      <div className={tab + "w-[56px]"}>
        <button aria-label="Collapse"><PageArrow /></button>
        <button aria-label="Expand"><PageArrow up /></button>
      </div>
      <Indicator width="w-[73px]" left={GREEN} right={RED} label="Price" wrench={false} />
      <button aria-label="List" className={tab + "w-[30px]"}>
        <ListIcon />
      </button>
      <Indicator width="w-[99px]" left={GREEN} right={RED} label="Price" />
      <Indicator width="w-[180px]" check label="Bollinger (20 2)" />
      <Indicator width="w-[133px]" check label="EMA (13)" />
      <Indicator width="w-[123px]" color="#ff0090" label="EMA (9)" />
      <Indicator width="w-[144px]" color="#ff8040" label="EMA (200)" />
      <Indicator width="w-[134px]" color="#333cff" label="EMA (63)" />
    </div>
    <div className="flex h-[28px] shrink-0 items-center border-r border-b border-[#78909c] bg-white">
      <span className="flex h-full w-[51px] items-center bg-[#78909c] pl-[5px] text-white">Year</span>
      <svg className="ml-[6px]" width="13" height="14" viewBox="0 0 13 14">
        <path d="M6.500 14 V2 M1.500 7 L6.500 2 L11.500 7" fill="none" stroke="#000" strokeWidth="2.500" />
      </svg>
      <span className="ml-[8px]">0.014</span>
      <svg className="ml-[13px]" width="13" height="14" viewBox="0 0 13 14">
        <path d="M6.500 0 V12 M1.500 7 L6.500 12 L11.500 7" fill="none" stroke="#000" strokeWidth="2.500" />
      </svg>
      <span className="mr-[4px] ml-[9px]">0.006</span>
    </div>
    <button aria-label="Company" className="flex h-[38px] w-[37px] shrink-0 items-center justify-center border-r border-b-2 border-[#78909c] bg-linear-to-b from-white to-[#ececec] pt-[2px]">
      <Building />
    </button>
    <span className="mt-auto pl-[3px] text-[16px] leading-[18px]">ProRealTime.com - End of Day</span>
  </div>
);

/* ---------- taskbar ---------- */

const Taskbar = () => (
  <footer className="flex h-[40px] shrink-0 items-start overflow-hidden border-t-2 border-[#b0bcc2] bg-linear-to-b from-[#e4eff4] to-[#dcebf2] font-['Open_Sans',sans-serif] text-[17px] text-[#1c1c1c]">
    <button className="mt-[12px] flex w-[640px] shrink-0 items-start gap-[14px] pl-[32px]">
      <svg className="mt-[5px]" width="30" height="30" viewBox="0 0 30 30">
        <defs>
          <linearGradient id="sun" x1="0" y1="0" x2="1" y2="1">
            <stop offset="0" stopColor="#ffc531" />
            <stop offset="1" stopColor="#f06a10" />
          </linearGradient>
        </defs>
        <circle cx="15" cy="15" r="15" fill="url(#sun)" />
        <ellipse cx="18" cy="24" rx="10" ry="9" fill="#9cc0ef" />
      </svg>
      <span className="leading-[20px]">7°C</span>
      <span className="ml-[18px] font-['Liberation_Sans',sans-serif] text-[18px] leading-[14px] text-[#cfdde0]">Analyze</span>
    </button>
    <button aria-label="Start" className="mt-[16px] ml-[2px]">
      <svg width="36" height="36" viewBox="0 0 36 36">
        <defs>
          <linearGradient id="win" x1="0" y1="0" x2="1" y2="1">
            <stop offset="0" stopColor="#45c8fb" />
            <stop offset="1" stopColor="#0466c8" />
          </linearGradient>
        </defs>
        <path d="M0 0 H17 V17 H0 Z M18 0 H35 V17 H18 Z M0 18 H17 V35 H0 Z M18 18 H35 V35 H18 Z" fill="url(#win)" />
      </svg>
    </button>
    <label className="mt-[10px] ml-[21px] flex h-[54px] w-[328px] shrink-0 items-start rounded-full border-2 border-[#d0dade] bg-[#f6fafc] pl-[14px]">
      <svg className="mt-[10px]" width="22" height="28" viewBox="0 0 22 28" fill="none" stroke="#222" strokeWidth="2.500">
        <circle cx="11" cy="11" r="8" />
        <path d="M6 18 L1 25" />
      </svg>
      <input aria-label="Search Windows" placeholder="Search" className="mt-[8px] ml-[16px] h-[26px] w-[196px] bg-transparent text-[18px] outline-none placeholder:text-[#555]" />
      <svg className="mt-[6px]" width="70" height="32" viewBox="0 0 70 32">
        <path d="M2 8 Q5 2 9 4 Q15 5 15 8 Z M26 14 Q30 5 37 6 Q50 5 52 14 Z" fill="#a9c8ee" />
        <path d="M28 12 Q34 7 42 10" stroke="#e5a0b8" strokeWidth="2" fill="none" />
        <g stroke="#9aa8ae" strokeWidth="2.500" fill="none">
          <path d="M18 0 L20 16 L34 20 M20 16 L10 27 M20 16 V32" />
          <path d="M60 4 L58 16 L68 17 M58 16 L50 24 M58 16 V32 M44 16 V28 L38 32" strokeWidth="1.500" />
        </g>
      </svg>
    </label>
    <button aria-label="Task view" className="mt-[16px] ml-[19px]">
      <svg width="36" height="30" viewBox="0 0 36 30">
        <rect x="0" y="12" width="26" height="20" fill="#444" />
        <rect x="10" y="1" width="26" height="28" fill="#f8f8f8" />
        <rect x="10" y="12" width="16" height="20" fill="#b5b5b5" />
      </svg>
    </button>
    <button aria-label="Snipping tool" className="mt-[4px] ml-[20px] flex h-[50px] w-[58px] shrink-0 justify-center rounded-[6px] border border-[#dfe5e8] bg-[#f3f8fa] pt-[12px]">
      <svg width="36" height="32" viewBox="0 0 36 32">
        <path d="M2 18 V2 H17" fill="none" stroke="#d83b01" strokeWidth="4" strokeDasharray="4 2" />
        <rect x="6" y="6" width="12" height="12" fill="#e8e8e8" />
        <path d="M19 2 V20 H28" fill="none" stroke="#777" strokeWidth="4" />
        <circle cx="30" cy="20" r="4" fill="none" stroke="#1296d8" strokeWidth="2.500" />
      </svg>
    </button>
    <button aria-label="ProRealTime" className="mt-[17px] ml-[20px] flex h-[35px] w-[34px] shrink-0 items-start justify-center rounded-t-[4px] bg-black pt-[8px]">
      <Candles color="#5db4e8" size={20} />
    </button>
    <button aria-label="Chrome" className="mt-[15px] ml-[30px]">
      <svg width="36" height="36" viewBox="0 0 36 36">
        <circle cx="18" cy="18" r="18" fill="#fbc116" />
        <path d="M18 18 L2.400 9 A18 18 0 0 1 33.600 9 Z" fill="#e33b2e" />
        <path d="M18 9 H33.600 L18 18 Z" fill="#e33b2e" />
        <path d="M18 18 L2.400 9 A18 18 0 0 0 18 36 Z" fill="#229a48" />
        <circle cx="18" cy="18" r="9" fill="#fff" />
        <circle cx="18" cy="18" r="7" fill="#2f7df0" />
      </svg>
    </button>
    <div className="ml-auto flex shrink-0 items-start pr-[29px]">
      <svg className="mt-[27px]" width="18" height="12" viewBox="0 0 18 12">
        <path d="M1 11 L9 2 L17 11" fill="none" stroke="#1c1c1c" strokeWidth="2" />
      </svg>
      <svg className="mt-[25px] ml-[27px]" width="24" height="18" viewBox="0 0 24 18">
        <rect x="1" y="1" width="22" height="20" rx="2" fill="none" stroke="#1c1c1c" strokeWidth="2" />
        <path d="M5 5.500 H19 M5 9.500 H19" stroke="#1c1c1c" strokeWidth="2" strokeDasharray="2 2" />
      </svg>
      <span className="mt-[12px] ml-[27px] leading-[24px]">ENG</span>
      <svg className="mt-[21px] ml-[27px]" width="25" height="18" viewBox="0 0 25 18" fill="none" stroke="#1c1c1c" strokeWidth="2">
        <path d="M15 2 H1 V18 M17 2 H23 V9 Q23 12 20 12 Q17 12 17 9 Z M20 12 V18 M17 6 H23" />
      </svg>
      <svg className="mt-[25px] ml-[12px]" width="24" height="16" viewBox="0 0 24 16" fill="none" stroke="#1c1c1c" strokeWidth="1.800">
        <path d="M1 6 H5 L11 1 V18 M1 6 V14 H5 M14 5 L22 13 M22 5 L14 13" />
      </svg>
      <svg className="mt-[22px] ml-[12px]" width="26" height="18" viewBox="0 0 26 18">
        <rect x="5" y="6" width="17" height="14" rx="2" fill="#1c1c1c" />
        <path d="M22 9 H25 V14 H22 M10 4 H20 Q22 4 23 7" fill="none" stroke="#1c1c1c" strokeWidth="2" />
        <path d="M6 0 L0 9 H5 L2 15 L10 6 H6 L9 0 Z" fill="#1c1c1c" stroke="#e0ecf2" />
      </svg>
      <span className="mt-[10px] ml-[53px] leading-[24px]">5:43 PM</span>
    </div>
  </footer>
);

export default function App() {
  return (
    <div className="flex h-screen flex-col overflow-hidden bg-[#9bbac8] font-['Liberation_Sans',Arial,sans-serif] text-[18px] leading-[22px] text-black">
      <div className="flex min-h-0 flex-1 flex-col border-r-2 border-l border-[#455a64]">
        <Header />
        <ChartBar />
        <div className="flex min-h-0 flex-1">
          <Sidebar />
          <main className="flex min-w-0 flex-1 flex-col border-t border-b-2 border-[#78909c] bg-white">
            <div className="flex min-h-0 flex-1 flex-col bg-linear-to-b from-white to-[#d8e3ff]">
              <Panel className="min-h-0 flex-1 border-b" plot={<PricePlot />} axis={<PriceAxis />}>
                <PriceTabs />
              </Panel>
              <Panel className="h-[62px] shrink-0 border-b" plot={<MacdPlot />} axis={<MacdAxis />}>
                <div className="flex">
                  <div className="flex h-[32px] border-b border-[#78909c] bg-[#cddbe1] pt-[1px]">
                    <Indicator width="w-[182px]" left={RED} right="#3030dd" label="MACD (60 130 45)" wrench={false} />
                    <Indicator width="w-[187px]" left={RED} right="#3030dd" label="MACD (10 22 7)" />
                  </div>
                </div>
              </Panel>
              <Panel className="h-[48px] shrink-0" plot={<VolumePlot />} axis={<VolumeAxis />}>
                <div className="flex">
                  <div className="flex h-[32px] border-b-2 border-[#78909c] bg-[#cddbe1] pt-[2px]">
                    <Indicator width="w-[91px]" left={GREEN} right={RED} label="Volume" wrench={false} />
                  </div>
                </div>
              </Panel>
            </div>
            <div className="mr-[76px] border-t-2 border-[#78909c]" />
            <DateAxis />
          </main>
        </div>
      </div>
      <Taskbar />
    </div>
  );
}
